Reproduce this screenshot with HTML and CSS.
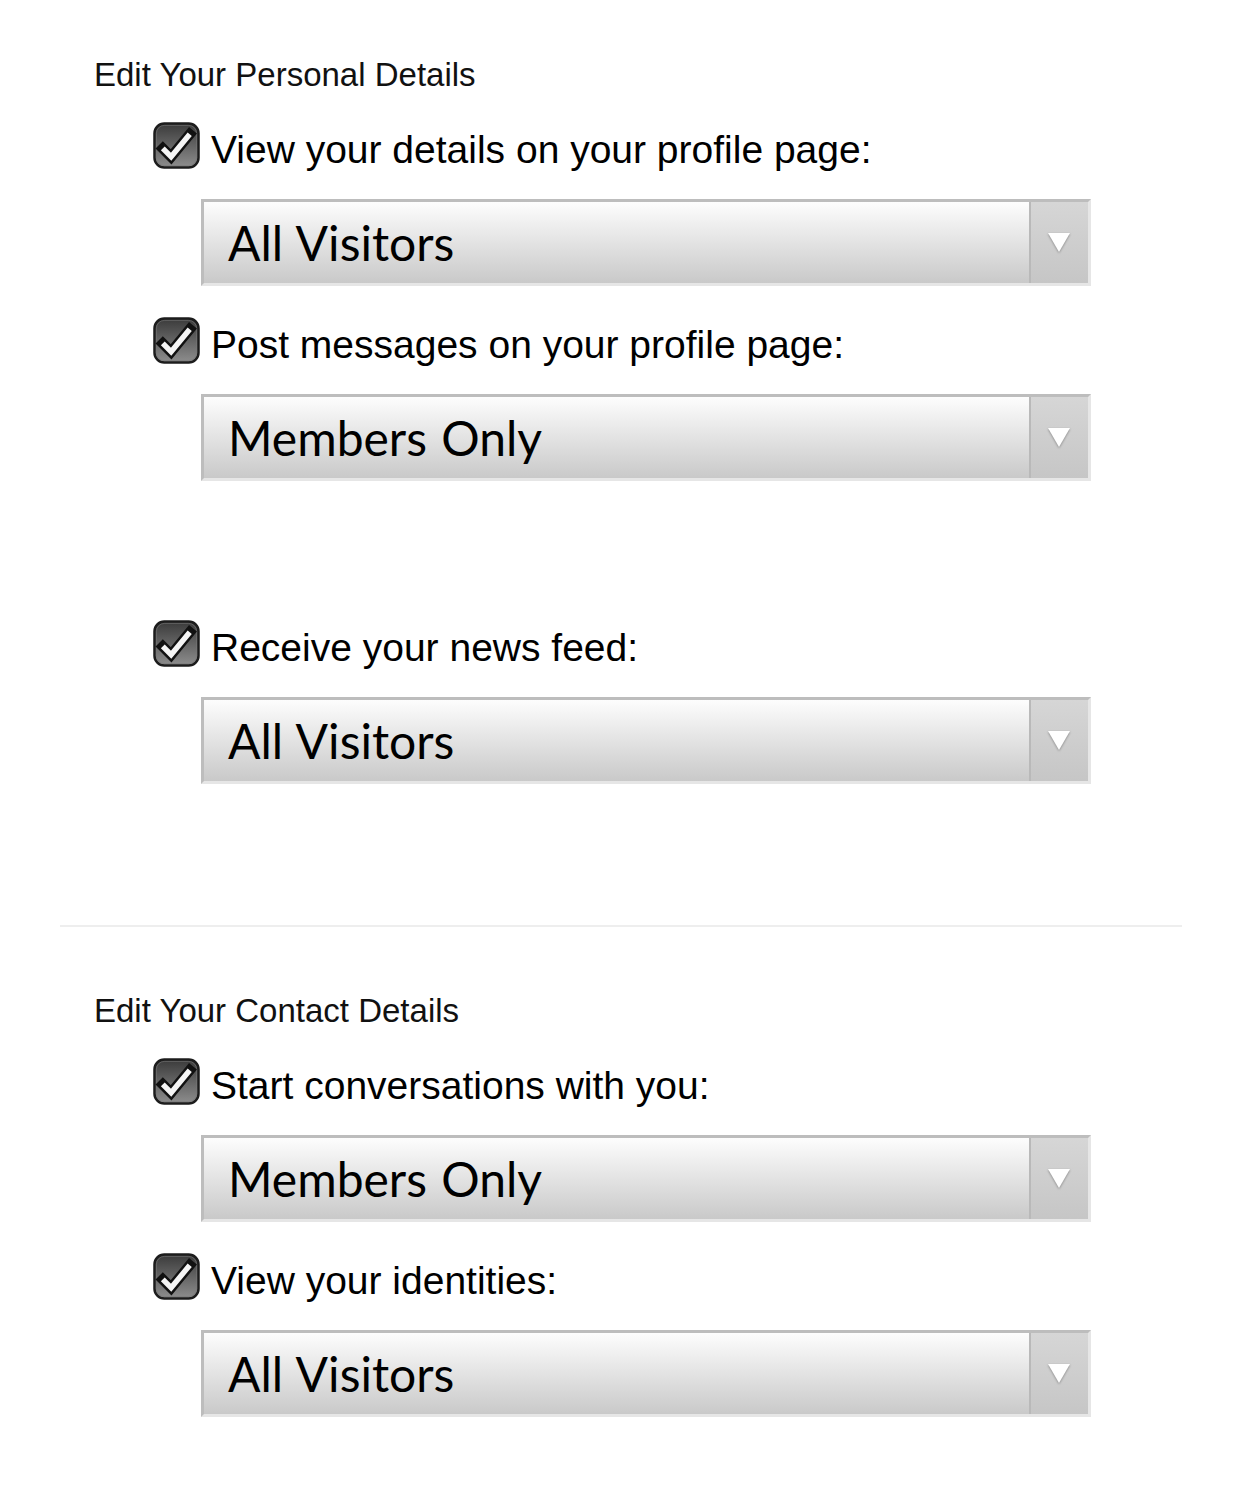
FILE: index.html
```html
<!DOCTYPE html>
<html lang="en">
<head>
    <meta charset="UTF-8">
    <meta name="viewport" content="width=device-width, initial-scale=1.0">
    <title>Privacy settings</title>
    <link rel="stylesheet" href="styles.css">
</head>
<body>
    <svg class="defs" width="0" height="0" aria-hidden="true">
        <defs>
            <linearGradient id="boxFill" x1="0" y1="0" x2="0" y2="1">
                <stop offset="0" stop-color="#3a3a3a"/>
                <stop offset="1" stop-color="#8e8e8e"/>
            </linearGradient>
            <symbol id="check" viewBox="0 0 48 48">
                <rect x="1.5" y="1.5" width="45" height="45" rx="10" fill="url(#boxFill)" stroke="#1c1c1c" stroke-width="2.5"/>
                <rect x="3.5" y="3.5" width="41" height="41" rx="8" fill="none" stroke="#777" stroke-width="1" opacity=".6"/>
                <polyline points="10,27 18.5,35.5 37.5,12.5" fill="none" stroke="#111" stroke-width="10.5" stroke-linejoin="miter" stroke-linecap="square"/>
                <polyline points="10,27 18.5,35.5 37.5,12.5" fill="none" stroke="#f5f5f5" stroke-width="5.5" stroke-linejoin="miter" stroke-linecap="butt"/>
            </symbol>
        </defs>
    </svg>

    <div class="page">
        <section class="section first">
            <h2 class="title">Edit Your Personal Details</h2>

            <div class="field">
                <div class="check-row">
                    <svg class="check"><use href="#check"/></svg>
                    <span class="label">View your details on your profile page:</span>
                </div>
                <div class="select">
                    <span class="value">All Visitors</span>
                    <span class="arrow"></span>
                </div>
            </div>

            <div class="field">
                <div class="check-row">
                    <svg class="check"><use href="#check"/></svg>
                    <span class="label">Post messages on your profile page:</span>
                </div>
                <div class="select">
                    <span class="value">Members Only</span>
                    <span class="arrow"></span>
                </div>
            </div>

            <div class="spacer"></div>

            <div class="field">
                <div class="check-row">
                    <svg class="check"><use href="#check"/></svg>
                    <span class="label">Receive your news feed:</span>
                </div>
                <div class="select">
                    <span class="value">All Visitors</span>
                    <span class="arrow"></span>
                </div>
            </div>
        </section>

        <hr class="sep">

        <section class="section">
            <h2 class="title">Edit Your Contact Details</h2>

            <div class="field">
                <div class="check-row">
                    <svg class="check"><use href="#check"/></svg>
                    <span class="label">Start conversations with you:</span>
                </div>
                <div class="select">
                    <span class="value">Members Only</span>
                    <span class="arrow"></span>
                </div>
            </div>

            <div class="field">
                <div class="check-row">
                    <svg class="check"><use href="#check"/></svg>
                    <span class="label">View your identities:</span>
                </div>
                <div class="select">
                    <span class="value">All Visitors</span>
                    <span class="arrow"></span>
                </div>
            </div>
        </section>
    </div>
</body>
</html>
```

FILE: styles.css
```css
*{margin:0; padding:0; box-sizing:border-box}
body{background:#fff; color:#000; font-family:"Liberation Sans", Arial, sans-serif}
.defs{position:absolute; width:0; height:0; overflow:hidden}

.page{padding:0 60px 89px}
.section{padding-left:34px}
.section.first{padding-top:56px}

.title{font-size:33px; font-weight:normal; line-height:37px; color:#111; margin-bottom:29px}

.field{padding-left:59px; margin-bottom:31px}
.field:last-child{margin-bottom:0}
.check-row{display:flex; align-items:flex-start; gap:11px; height:47px}
.check{width:47px; height:47px; flex-shrink:0}
.label{font-size:39px; line-height:47px; padding-top:4px; white-space:nowrap}

.select{display:flex; align-items:stretch; margin:30px 0 0 48px; width:890px; height:87px;
    border-style:solid; border-width:3px; border-color:#bdbdbd #e6e6e6 #e6e6e6 #bdbdbd;
    background:linear-gradient(#fdfdfd, #c9c9c9)}
.value{flex:1; display:flex; align-items:center; padding-left:24px; font-family:Lato, "Liberation Sans", sans-serif; font-size:48px; word-spacing:2px; color:#000}
.arrow{width:59px; position:relative; border-left:2px solid #b9b9b9; background:linear-gradient(#d6d6d6, #c6c6c6)}
.arrow::after{content:''; position:absolute; left:17px; top:31px; border-style:solid; border-width:19px 11px 0 11px; border-color:#fff transparent transparent transparent; filter:drop-shadow(0 1px 1px #888)}

.spacer{height:108px}

.sep{border:0; height:2px; background:#eeeeee; margin:141px 0 65px}
```
